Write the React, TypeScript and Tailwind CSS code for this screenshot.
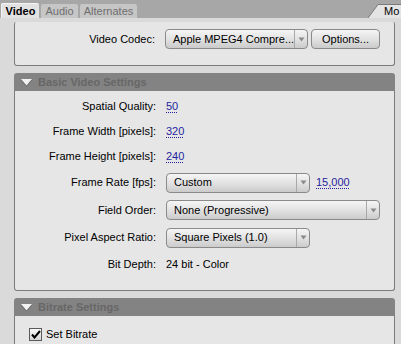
import React from 'react';

const font = { fontFamily: '"Liberation Sans", Arial, sans-serif' };

function Dropdown({ text, width }: { text: string; width: string }) {
  return (
    <div className={`flex h-[20px] ${width} items-stretch rounded-[4px] border border-[#8a8a8a] bg-gradient-to-b from-[#f5f5f5] via-[#e2e2e2] to-[#cbcbcb]`}>
      <span className="flex flex-1 items-center overflow-hidden whitespace-nowrap pl-[7px] text-[11px] text-black">{text}</span>
      <span className="flex w-[13px] items-center justify-center border-l border-[#a9a9a9]">
        <svg width="7" height="5" viewBox="0 0 7 5">
          <polygon points="0.5,0.5 6.5,0.5 3.5,4.5" fill="#8a8a8a" />
        </svg>
      </span>
    </div>
  );
}

function Row({ label, h, children }: { label: string; h: string; children: React.ReactNode }) {
  return (
    <div className={`flex ${h} items-center`}>
      <div className="w-[141px] text-right text-[11px] text-black">{label}</div>
      <div className="ml-[10px] flex items-center gap-[6px] text-[11px]">{children}</div>
    </div>
  );
}

function Value({ children }: { children: React.ReactNode }) {
  return (
    <span className="text-[11px] text-[#1f1f9e] underline decoration-dotted underline-offset-2">{children}</span>
  );
}

function Header({ title }: { title: string }) {
  return (
    <div className="flex h-[18px] items-center rounded-t-[3px] bg-[#838383] pl-[6px]">
      <svg width="13" height="8" viewBox="0 0 13 8" className="mt-[1px]">
        <polygon points="1,1 12,1 6.5,7.5" fill="#5f5f5f" />
        <polygon points="1,0 12,0 6.5,6.5" fill="#f2f2f2" />
      </svg>
      <span className="ml-[5px] text-[11px] font-bold text-[#676767]">{title}</span>
    </div>
  );
}

export default function App() {
  return (
    <div className="h-[344px] w-[401px] overflow-hidden bg-[#dadada]" style={font}>
      {/* tab bar */}
      <div className="flex h-[18px] items-end bg-[#a7a7a7]">
        <div className="ml-[1px] flex h-[15px] w-[38px] items-center justify-center rounded-t-[2px] border-l border-t border-[#f4f4f4] bg-[#e2e2e2] text-[11px] font-bold text-black">
          Video
        </div>
        <div className="ml-[2px] flex h-[14px] w-[37px] items-center justify-center rounded-t-[2px] bg-[#c6c6c6] text-[11px] text-[#6e6e6e]">
          Audio
        </div>
        <div className="ml-[2px] flex h-[14px] w-[57px] items-center justify-center rounded-t-[2px] bg-[#c6c6c6] text-[11px] text-[#6e6e6e]">
          Alternates
        </div>
        <div className="ml-auto flex h-[14px] items-stretch">
          <svg width="12" height="14" viewBox="0 0 12 14">
            <polygon points="0,14 10,0.5 12,0.5 12,14" fill="#e4e4e4" />
            <polyline points="0,14 10,0.5 12,0.5" fill="none" stroke="#7a7a7a" strokeWidth="1" />
          </svg>
          <div className="flex w-[21px] items-center overflow-hidden border-t border-[#7a7a7a] bg-[#e4e4e4] pl-[4px] text-[11px] whitespace-nowrap text-black">
            Mo
          </div>
        </div>
      </div>

      <div className="flex flex-col pl-[14px] pr-[6px] pt-[4px]">
        {/* codec panel */}
        <div className="flex h-[44px] flex-col rounded-b-[3px] rounded-t-[2px] border-x border-b border-[#7c7c7c] bg-[#e6e6e6] pt-[7px]">
          <div className="flex h-[20px] items-center">
            <div className="w-[140px] text-right text-[11px] text-black">Video Codec:</div>
            <div className="ml-[10px] flex items-center gap-[3px]">
              <Dropdown text="Apple MPEG4 Compre..." width="w-[143px]" />
              <button className="h-[20px] w-[69px] rounded-[4px] border border-[#8a8a8a] bg-gradient-to-b from-[#f5f5f5] via-[#e2e2e2] to-[#cbcbcb] text-[11px] text-black">
                Options...
              </button>
            </div>
          </div>
        </div>

        {/* basic video settings */}
        <div className="mt-[7px]">
          <Header title="Basic Video Settings" />
          <div className="flex h-[200px] flex-col rounded-b-[3px] border-x border-b border-[#7c7c7c] bg-[#e6e6e6] pt-[3px]">
            <Row label="Spatial Quality:" h="h-[25px]"><Value>50</Value></Row>
            <Row label="Frame Width [pixels]:" h="h-[25px]"><Value>320</Value></Row>
            <Row label="Frame Height [pixels]:" h="h-[25px]"><Value>240</Value></Row>
            <Row label="Frame Rate [fps]:" h="h-[27px]">
              <Dropdown text="Custom" width="w-[144px]" />
              <Value>15,000</Value>
            </Row>
            <Row label="Field Order:" h="h-[28px]">
              <Dropdown text="None (Progressive)" width="w-[214px]" />
            </Row>
            <Row label="Pixel Aspect Ratio:" h="h-[27px]">
              <Dropdown text="Square Pixels (1.0)" width="w-[144px]" />
            </Row>
            <Row label="Bit Depth:" h="h-[27px]">
              <span className="text-[11px] text-black">24 bit - Color</span>
            </Row>
          </div>
        </div>

        {/* bitrate settings */}
        <div className="mt-[7px]">
          <Header title="Bitrate Settings" />
          <div className="flex h-[40px] flex-col border-x border-[#7c7c7c] bg-[#e6e6e6] pl-[14px] pt-[10px]">
            <label className="flex items-center gap-[4px] text-[11px] text-black">
              <span className="flex h-[13px] w-[13px] items-center justify-center border border-[#5a5a5a] bg-gradient-to-b from-[#fafafa] to-[#d4d4d4]">
                <svg width="10" height="9" viewBox="0 0 10 9">
                  <path d="M1 4.5 L3.5 7.5 L9 1" fill="none" stroke="#000" strokeWidth="2" />
                </svg>
              </span>
              Set Bitrate
            </label>
          </div>
        </div>
      </div>
    </div>
  );
}
